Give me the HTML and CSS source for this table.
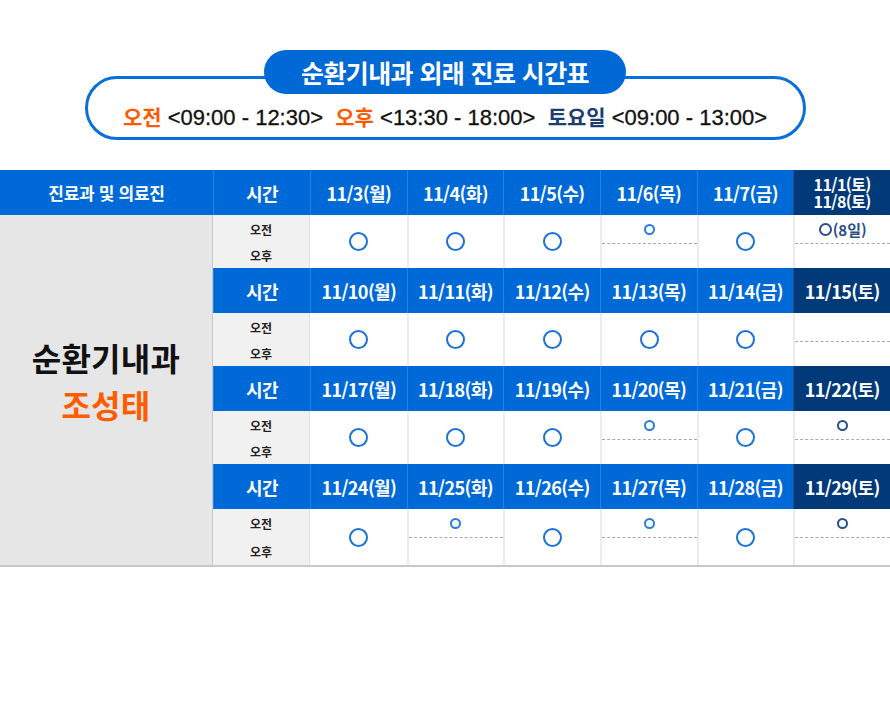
FILE: index.html
```html
<!DOCTYPE html>
<html lang="ko">
<head>
<meta charset="utf-8">
<title>순환기내과 외래 진료 시간표</title>
<link rel="stylesheet" href="styles.css">
</head>
<body>
<div class="page">
  <div class="heading">
    <div class="title-pill">순환기내과 외래 진료 시간표</div>
    <div class="legend">
      <span class="am">오전</span> &lt;09:00 - 12:30&gt;&nbsp; <span class="am">오후</span> &lt;13:30 - 18:00&gt;&nbsp; <span class="sat">토요일</span> &lt;09:00 - 13:00&gt;
    </div>
  </div>

  <div class="schedule">
    <div class="hd hd-dept">진료과 및 의료진</div>
    <div class="hd">시간</div>
    <div class="hd">11/3(월)</div>
    <div class="hd">11/4(화)</div>
    <div class="hd">11/5(수)</div>
    <div class="hd">11/6(목)</div>
    <div class="hd">11/7(금)</div>
    <div class="hd hd-sat two"><span>11/1(토)</span><span>11/8(토)</span></div>

    <div class="dept">
      <div class="dept-name">순환기내과</div>
      <div class="doctor">조성태</div>
    </div>

    <!-- week 1 -->
    <div class="time"><span>오전</span><span>오후</span></div>
    <div class="cell"><i class="ring"></i></div>
    <div class="cell"><i class="ring"></i></div>
    <div class="cell"><i class="ring"></i></div>
    <div class="cell split"><div class="top"><i class="ring-s"></i></div><div class="bottom"></div></div>
    <div class="cell"><i class="ring"></i></div>
    <div class="cell split"><div class="top note"><i class="ring-n"></i>(8일)</div><div class="bottom"></div></div>

    <!-- week 2 -->
    <div class="hd">시간</div>
    <div class="hd">11/10(월)</div>
    <div class="hd">11/11(화)</div>
    <div class="hd">11/12(수)</div>
    <div class="hd">11/13(목)</div>
    <div class="hd">11/14(금)</div>
    <div class="hd hd-sat">11/15(토)</div>
    <div class="time"><span>오전</span><span>오후</span></div>
    <div class="cell"><i class="ring"></i></div>
    <div class="cell"><i class="ring"></i></div>
    <div class="cell"><i class="ring"></i></div>
    <div class="cell"><i class="ring"></i></div>
    <div class="cell"><i class="ring"></i></div>
    <div class="cell split"><div class="top"></div><div class="bottom"></div></div>

    <!-- week 3 -->
    <div class="hd">시간</div>
    <div class="hd">11/17(월)</div>
    <div class="hd">11/18(화)</div>
    <div class="hd">11/19(수)</div>
    <div class="hd">11/20(목)</div>
    <div class="hd">11/21(금)</div>
    <div class="hd hd-sat">11/22(토)</div>
    <div class="time"><span>오전</span><span>오후</span></div>
    <div class="cell"><i class="ring"></i></div>
    <div class="cell"><i class="ring"></i></div>
    <div class="cell"><i class="ring"></i></div>
    <div class="cell split"><div class="top"><i class="ring-s"></i></div><div class="bottom"></div></div>
    <div class="cell"><i class="ring"></i></div>
    <div class="cell split"><div class="top"><i class="ring-s navy"></i></div><div class="bottom"></div></div>

    <!-- week 4 -->
    <div class="hd">시간</div>
    <div class="hd">11/24(월)</div>
    <div class="hd">11/25(화)</div>
    <div class="hd">11/26(수)</div>
    <div class="hd">11/27(목)</div>
    <div class="hd">11/28(금)</div>
    <div class="hd hd-sat">11/29(토)</div>
    <div class="time"><span>오전</span><span>오후</span></div>
    <div class="cell"><i class="ring"></i></div>
    <div class="cell split"><div class="top"><i class="ring-s"></i></div><div class="bottom"></div></div>
    <div class="cell"><i class="ring"></i></div>
    <div class="cell split"><div class="top"><i class="ring-s"></i></div><div class="bottom"></div></div>
    <div class="cell"><i class="ring"></i></div>
    <div class="cell split"><div class="top"><i class="ring-s navy"></i></div><div class="bottom"></div></div>
  </div>
</div>
</body>
</html>
```

FILE: styles.css
```css
* { box-sizing: border-box; }
html, body { margin: 0; padding: 0; background: #fff; }
body {
  font-family: "Noto Sans CJK KR", "Noto Sans", "Liberation Sans", sans-serif;
  color: #222;
}
.page { width: 890px; height: 708px; }

.heading {
  padding-top: 50px;
  display: flex;
  flex-direction: column;
  align-items: center;
}
.title-pill {
  position: relative;
  z-index: 1;
  width: 362px;
  height: 44px;
  border-radius: 22px;
  background: #0169d6;
  color: #fff;
  font-size: 25px;
  font-weight: 700;
  line-height: 44px;
  text-align: center;
  letter-spacing: -0.6px;
}
.legend {
  margin-top: -18px;
  width: 721px;
  height: 64px;
  border: 3px solid #0b6fd9;
  border-radius: 34px;
  padding-top: 25px;
  text-align: center;
  font-family: "Liberation Sans", "Noto Sans CJK KR", sans-serif;
  font-size: 22px;
  line-height: 24px;
  color: #111;
  -webkit-text-stroke: 0.3px #111;
  white-space: nowrap;
}
.legend .am { color: #ff5a00; font-weight: 700; font-family: "Noto Sans CJK KR", sans-serif; -webkit-text-stroke: 0; font-size: 21px; }
.legend .sat { color: #1c3d70; font-weight: 700; font-family: "Noto Sans CJK KR", sans-serif; -webkit-text-stroke: 0; font-size: 21px; }

.schedule {
  margin-top: 30px;
  display: grid;
  grid-template-columns: 213px 97px repeat(6, 1fr);
  grid-template-rows: 45px 53px 45px 53px 45px 53px 45px 56px;
  border-bottom: 2px solid #c9c9c9;
}
.hd {
  background: #0069d8;
  color: #fff;
  font-weight: 700;
  font-size: 18px;
  display: flex;
  align-items: center;
  justify-content: center;
  border-left: 1px solid #2a7edf;
  letter-spacing: -0.6px;
  white-space: nowrap;
}
.hd-dept { font-size: 17px; border-left: none; letter-spacing: -0.3px; }
.hd-sat { background: #023a79; border-left-color: #1f4f88; }
.hd.two {
  flex-direction: column;
  font-size: 16px;
  line-height: 17px;
  padding-top: 1px;
}
.hd.two span { display: block; height: 17px; }

.dept {
  grid-column: 1;
  grid-row: 2 / 9;
  background: #e6e6e6;
  border-right: 1px solid #c8c8c8;
  display: flex;
  flex-direction: column;
  align-items: center;
  justify-content: center;
  font-size: 32px;
  font-weight: 700;
  line-height: 47px;
  padding-bottom: 18px;
}
.dept-name { color: #111; letter-spacing: 0.3px; }
.doctor { color: #ff5c00; letter-spacing: 0.3px; }

.time {
  background: #f1f1f1;
  display: flex;
  flex-direction: column;
  align-items: center;
  justify-content: space-around;
  font-size: 12px;
  font-weight: 700;
  color: #222;
  padding: 1px 0 0;
  border-right: 1px solid #e2e2e2;
}
.cell {
  background: #fff;
  display: flex;
  align-items: center;
  justify-content: center;
  border-left: 2px solid #ececec;
}
.time + .cell { border-left: none; }
.cell.split {
  flex-direction: column;
  align-items: stretch;
  justify-content: flex-start;
}
.split .top {
  height: 29px;
  border-bottom: 1px dashed #aaa;
  display: flex;
  align-items: center;
  justify-content: center;
}
.split .bottom { flex: 1; }

.ring {
  display: block;
  width: 19px;
  height: 19px;
  border: 2.5px solid #1a72d8;
  border-radius: 50%;
}
.ring-s {
  display: block;
  width: 11px;
  height: 11px;
  border: 2px solid #2a7ddc;
  border-radius: 50%;
}
.ring-s.navy { border-color: #25508a; }
.note {
  font-size: 15px;
  font-weight: 700;
  color: #2a4f86;
}
.ring-n {
  display: inline-block;
  width: 13px;
  height: 13px;
  border: 2px solid #2a4f86;
  border-radius: 50%;
  margin-right: 1px;
}
```
